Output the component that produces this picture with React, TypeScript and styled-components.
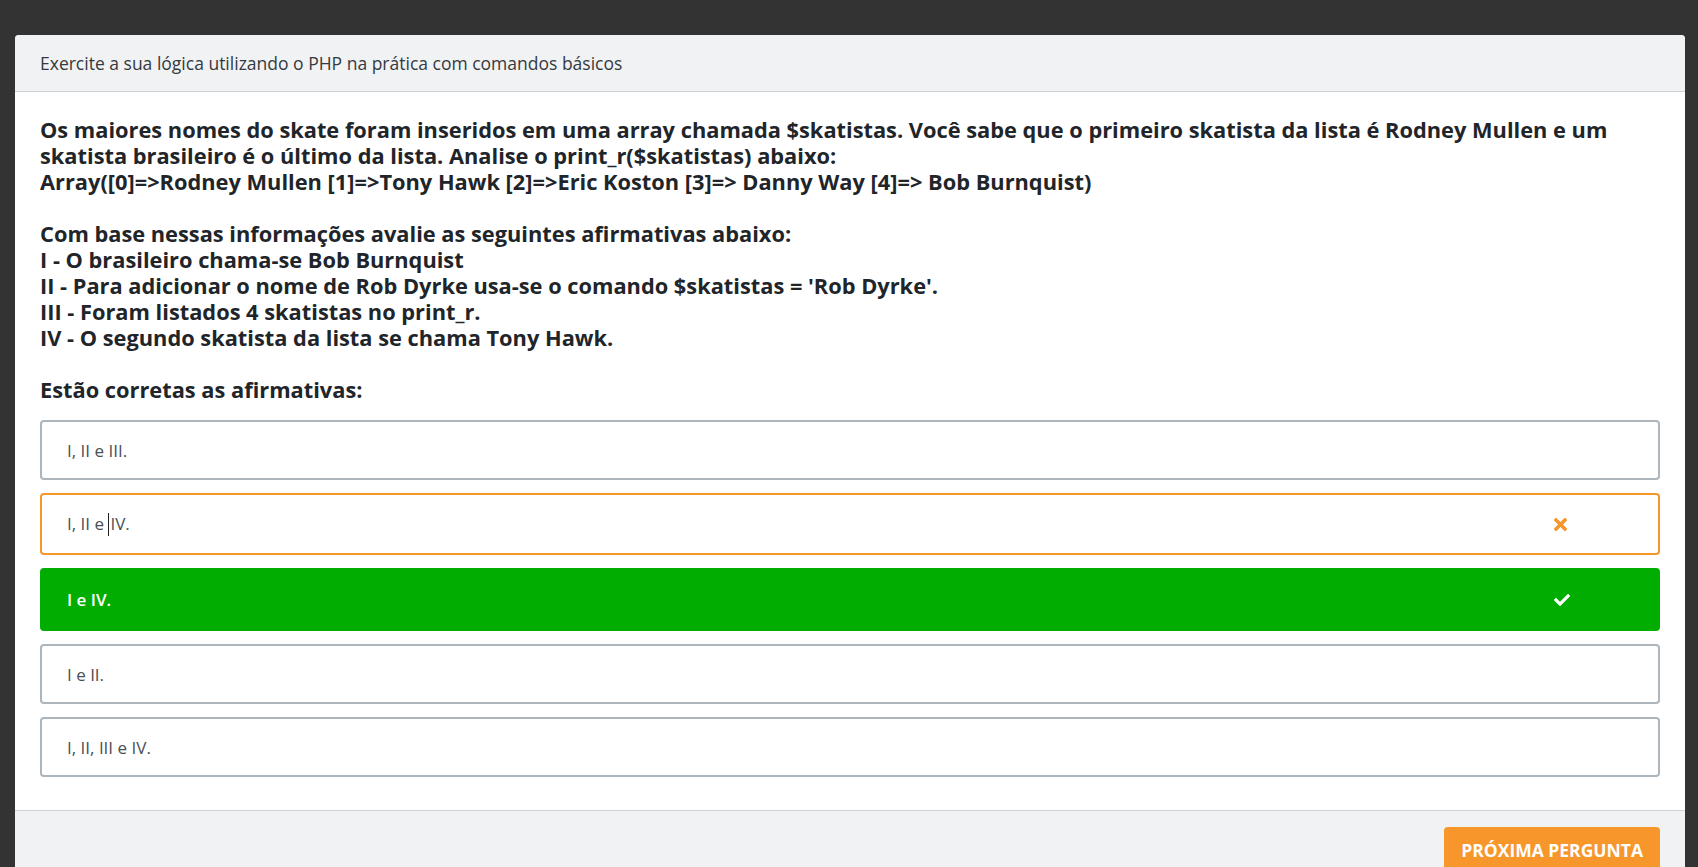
import React from "react";
import styled, {createGlobalStyle} from "styled-components";
import {FaCheck, FaTimes} from "react-icons/fa";

const GlobalStyle = createGlobalStyle`
    * {
        box-sizing: border-box;
    }
    body {
        margin: 0;
        background: #333333;
        font-family: "Open Sans", "Liberation Sans", sans-serif;
    }
`

type OptionState = 'idle' | 'wrong' | 'right'

const options: {text: string, state: OptionState}[] = [
    {text: 'I, II e III.', state: 'idle'},
    {text: 'I, II e IV.', state: 'wrong'},
    {text: 'I e IV.', state: 'right'},
    {text: 'I e II.', state: 'idle'},
    {text: 'I, II, III e IV.', state: 'idle'},
]

export default function App() {
    return (
        <>
            <GlobalStyle/>
            <Page>
                <Card>
                    <CardHeader>Exercite a sua lógica utilizando o PHP na prática com comandos básicos</CardHeader>
                    <CardBody>
                        <Question>
                            Os maiores nomes do skate foram inseridos em uma array chamada $skatistas. Você sabe que o primeiro skatista da lista é Rodney Mullen e um skatista brasileiro é o último da lista. Analise o print_r($skatistas) abaixo:<br/>
                            Array([0]=&gt;Rodney Mullen [1]=&gt;Tony Hawk [2]=&gt;Eric Koston [3]=&gt; Danny Way [4]=&gt; Bob Burnquist)<br/>
                            <br/>
                            Com base nessas informações avalie as seguintes afirmativas abaixo:<br/>
                            I - O brasileiro chama-se Bob Burnquist<br/>
                            II - Para adicionar o nome de Rob Dyrke usa-se o comando $skatistas = 'Rob Dyrke'.<br/>
                            III - Foram listados 4 skatistas no print_r.<br/>
                            IV - O segundo skatista da lista se chama Tony Hawk.<br/>
                            <br/>
                            Estão corretas as afirmativas:
                        </Question>
                        <OptionList>
                            {options.map((o) => (
                                <Option key={o.text} $state={o.state}>
                                    {o.state === 'wrong'
                                        ? <span>I, II e <Caret/>IV.</span>
                                        : <span>{o.text}</span>}
                                    {o.state === 'wrong' && <OptionIcon $state={o.state}><FaTimes/></OptionIcon>}
                                    {o.state === 'right' && <OptionIcon $state={o.state}><FaCheck/></OptionIcon>}
                                </Option>
                            ))}
                        </OptionList>
                    </CardBody>
                    <CardFooter>
                        <NextButton>PRÓXIMA PERGUNTA</NextButton>
                    </CardFooter>
                </Card>
            </Page>
        </>
    );
}

const Page = styled.div`
    padding: 35px 13px 0 15px;
    min-height: 100vh;
    overflow: hidden;
`

const Card = styled.div`
    background: white;
    border-radius: 4px;
    overflow: hidden;
`

const CardHeader = styled.div`
    height: 57px;
    display: flex;
    align-items: center;
    padding: 0 25px;
    background: #f1f2f4;
    border-bottom: 1px solid #cdd0d4;
    color: #343a40;
    font-size: 17.5px;
`

const CardBody = styled.div`
    padding: 25px 25px 33px;
`

const Question = styled.p`
    margin: 0;
    font-size: 21.8px;
    line-height: 26px;
    font-weight: 700;
    color: #212529;
`

const OptionList = styled.div`
    margin-top: 17px;
    display: flex;
    flex-direction: column;
    gap: 13px;
`

const Option = styled.div<{$state: OptionState}>`
    height: ${p => p.$state === 'wrong' ? 62 : p.$state === 'right' ? 63 : 60}px;
    display: flex;
    align-items: center;
    justify-content: space-between;
    padding: 0 88px 0 25px;
    border-radius: 4px;
    border: 2px solid ${p => p.$state === 'wrong' ? '#f7962b' : p.$state === 'right' ? '#00ad00' : '#adb5bd'};
    background: ${p => p.$state === 'right' ? '#00ad00' : 'white'};
    color: ${p => p.$state === 'right' ? 'white' : '#495057'};
    font-weight: ${p => p.$state === 'right' ? 600 : 400};
    font-size: 17px;
`

const OptionIcon = styled.span<{$state: OptionState}>`
    display: flex;
    font-size: ${p => p.$state === 'wrong' ? 19 : 16}px;
    color: ${p => p.$state === 'wrong' ? '#f7962b' : 'white'};
`

// the mouse I-beam left in the screenshot
const Caret = styled.span`
    display: inline-block;
    width: 1px;
    height: 23px;
    margin: 0 1px 0 0;
    vertical-align: middle;
    background: #222;
`

const CardFooter = styled.div`
    display: flex;
    justify-content: flex-end;
    padding: 16px 25px 20px;
    background: #f1f2f4;
    border-top: 1px solid #cdd0d4;
`

const NextButton = styled.button`
    height: 46px;
    padding: 0 17px;
    border: none;
    border-radius: 4px;
    background: #f7962b;
    color: white;
    font-family: "Open Sans", "Liberation Sans", sans-serif;
    font-weight: 700;
    font-size: 17.5px;
`
